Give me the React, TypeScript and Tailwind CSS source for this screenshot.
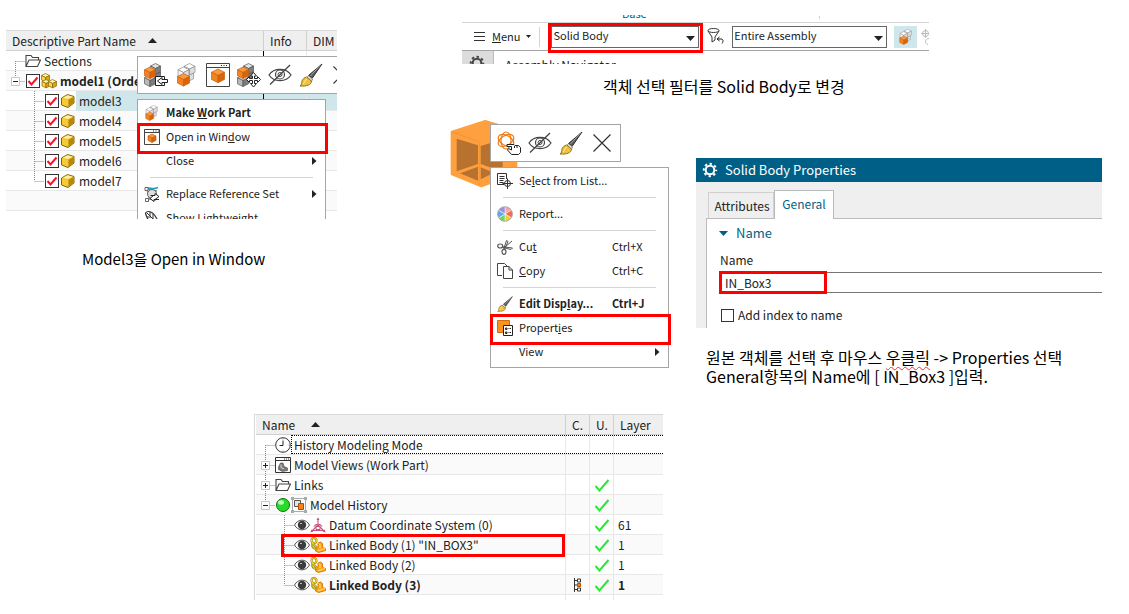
import { useState } from 'react';
import type { ReactNode } from 'react';
import clsx from 'clsx';

// ---------- Icons ----------

interface IsoProps {
  x: number;
  y: number;
  w: number;
  tone: 'orange' | 'gray' | 'yellow' | 'wire';
}

const tones = {
  orange: ['#fb9a3c', '#f58220', '#d9650b', '#c8600f'],
  gray: ['#e3e3e3', '#b9b9b9', '#7d7d7d', '#555555'],
  yellow: ['#fff3a8', '#f9d648', '#d9a514', '#8a6508'],
  wire: ['#ffffff', '#f3f3f3', '#dedede', '#8c8c8c'],
};

// Isometric cube: x is the centre line, y the top corner, w the half width
const Iso = ({ x, y, w, tone }: IsoProps) => {
  const h = w / 2;
  const d = w * 1.1;
  const [top, left, right, line] = tones[tone];
  return (
    <g stroke={line} strokeWidth=".7" strokeLinejoin="round">
      <path fill={top} d={`M${x} ${y}l${w} ${h}l${-w} ${h}l${-w} ${-h}z`} />
      <path fill={left} d={`M${x - w} ${y + h}l${w} ${h}v${d}l${-w} ${-h}z`} />
      <path fill={right} d={`M${x + w} ${y + h}l${-w} ${h}v${d}l${w} ${-h}z`} />
    </g>
  );
};

interface SvgProps {
  size?: number;
  box?: number;
  children: ReactNode;
}

const Svg = ({ size = 16, box = size, children }: SvgProps) => (
  <svg width={size} height={size} viewBox={`0 0 ${box} ${box}`} fill="none" className="shrink-0" aria-hidden="true">
    {children}
  </svg>
);

const CubeStack = () => (
  <>
    <Iso x={11.5} y={6.5} w={5} tone="gray" />
    <Iso x={11.5} y={0.5} w={5} tone="gray" />
    <Iso x={6} y={12} w={5.5} tone="gray" />
    <Iso x={6} y={4} w={5.5} tone="orange" />
  </>
);

const ReplaceIcon = () => (
  <Svg size={24}>
    <CubeStack />
    <path d="M11.500 13.500h9v9h-9z" fill="#fff" stroke="#222" />
    <path d="M23.500 16.500h-5.500v-2l-4.500 3.500l4.500 3.500v-2h5.500z" fill="#fff" stroke="#222" />
  </Svg>
);

const WorkPartIcon = ({ size = 24 }: { size?: number }) => (
  <Svg size={size} box={24}>
    <Iso x={13} y={7} w={5.5} tone="wire" />
    <Iso x={14.5} y={0.5} w={5.5} tone="wire" />
    <Iso x={8.5} y={4} w={5.5} tone="wire" />
    <Iso x={8.5} y={10.5} w={6} tone="orange" />
  </Svg>
);

const WindowIcon = ({ size = 24 }: { size?: number }) => (
  <Svg size={size} box={size}>
    <path d={size === 24 ? 'M.5.5h23v23H.5zM.5 4.500h23' : 'M.5.5h15v15H.5zM.5 3.500h15'} stroke="#444" />
    <path d={size === 24 ? 'M15 2.500h7' : 'M9 2h6'} stroke="#222" strokeWidth="1" strokeDasharray="1 1.500" />
    {size === 24 ? <Iso x={12} y={6} w={6.5} tone="orange" /> : <Iso x={8} y={5} w={4} tone="orange" />}
  </Svg>
);

const MoveIcon = () => (
  <Svg size={24}>
    <CubeStack />
    <path
      d="M16.500 9.500l3 3.500h-2v2.500h3v-2l3 3l-3 3v-2h-3v3h2l-3 3.500l-3-3.500h2v-3h-3v2l-3-3l3-3v2h3V13h-2z"
      fill="#fff"
      stroke="#222"
    />
  </Svg>
);

const HideIcon = () => (
  <Svg size={24}>
    <path d="M1 12c5-7.500 17-7.500 22 0c-5 7.500-17 7.500-22 0z" stroke="#444" strokeWidth="1.200" />
    <circle cx="12" cy="11.500" r="4.500" stroke="#444" strokeWidth="1.200" />
    <circle cx="12" cy="11.500" r="2" stroke="#444" />
    <path d="M2 21.500L22 2" stroke="#444" strokeWidth="1.300" />
  </Svg>
);

const BrushIcon = ({ size = 24 }: { size?: number }) => (
  <Svg size={size} box={24}>
    <path d="M23 1l-10 14.500l-3.500-3z" fill="#555" stroke="#333" />
    <path d="M21 2.500L11.500 13" stroke="#aaa" />
    <path d="M9.500 12.500l4 3.500l-1 2.500l-4.500-4z" fill="#ddd" stroke="#666" strokeWidth=".7" />
    <path d="M7.500 14l5 4c0 4-5 5.500-11.500 5c2-1 1.500-3 2-5c.5-2 2.500-3.500 4.500-4z" fill="#edc142" stroke="#93740f" />
    <path d="M8 16c-2 1-2.500 3-3.500 5" stroke="#fff0a6" />
  </Svg>
);

const CloseIcon = () => (
  <Svg size={24}>
    <path d="M3.500 3.500l17 17M20.500 3.500l-17 17" stroke="#333" strokeWidth="1.200" />
  </Svg>
);

const PickIcon = () => (
  <Svg size={24}>
    <g stroke="#f07d14" strokeWidth="1.200">
      <ellipse cx="9" cy="9.500" rx="5" ry="8.500" />
      <ellipse cx="9" cy="9.500" rx="5" ry="8.500" transform="rotate(60 9 9.500)" />
      <ellipse cx="9" cy="9.500" rx="5" ry="8.500" transform="rotate(120 9 9.500)" />
    </g>
    <path
      d="M14.500 23.500l-4-4.500l1-1.500l3 1.500v-3.500h-4.500v-2h7l1 1h3.500l2 2v5l-2 2z"
      fill="#fff"
      stroke="#222"
      strokeLinejoin="round"
    />
    <path d="M17.500 15v2M20 15v2" stroke="#222" />
  </Svg>
);

const RefSetIcon = () => (
  <Svg>
    <path d="M3 3l2.500 10M3 3l10 2M5 13l7 1" stroke="#888" strokeWidth="1.500" />
    <circle cx="8" cy="8" r="4.500" fill="#ddd" stroke="#666" />
    <path d="M2 2.500c4-2 6 2 12-1" stroke="#1ba0c8" strokeWidth="1.500" />
    <path d="M1 1.500h3v3H1zM1.500 12.500h3v3h-3z" fill="#fff" stroke="#666" />
    <path d="M6.500 9.500h4.500V7.500l4 3l-4 3M15 13.500h-5v2L6 12.500l3.500-3" fill="#fff" stroke="#222" />
  </Svg>
);

const FeatherIcon = () => (
  <Svg>
    <path d="M1.500 3c2-3 7-1 9 2c2 3 4 6 4.500 9l-2 1c-5-1-10-5-11.500-12z" fill="#fff" stroke="#333" strokeWidth="1.200" />
    <path d="M3 3l11 11M6 2v4M9 4v5M3 7h4" stroke="#333" />
  </Svg>
);

const ListPickIcon = () => (
  <Svg>
    <path d="M7 11.500H.5V.5h9V6" stroke="#333" />
    <path d="M2.500 3.500h5M2.500 5.500h5M2.500 7.500h4M2.500 9.500h4" stroke="#333" />
    <circle cx="10.500" cy="10.500" r="3" stroke="#333" />
    <path d="M10.500 5.500v10.500M5.500 10.500h10.500" stroke="#333" />
  </Svg>
);

const ReportIcon = () => (
  <Svg>
    <g stroke="#fff" strokeWidth=".5">
      <path d="M8 8V.5A7.500 7.500 0 0 1 14.500 4z" fill="#f7a6a0" />
      <path d="M8 8l6.500-4a7.500 7.500 0 0 1 0 8z" fill="#f26a52" />
      <path d="M8 8l6.500 4A7.500 7.500 0 0 1 8 15.500z" fill="#f2cf3a" />
      <path d="M8 8v7.500A7.500 7.500 0 0 1 1.500 12z" fill="#7fd15c" />
      <path d="M8 8l-6.500 4a7.500 7.500 0 0 1 0-8z" fill="#56aef0" />
      <path d="M8 8L1.500 4A7.500 7.500 0 0 1 8 .5z" fill="#9c8fe0" />
    </g>
    <circle cx="8" cy="8" r="7.300" stroke="#8e95a8" strokeWidth=".7" />
  </Svg>
);

const CutIcon = () => (
  <Svg>
    <ellipse cx="3.200" cy="7" rx="2.500" ry="2" stroke="#555" strokeWidth="1.200" />
    <ellipse cx="7" cy="12.800" rx="2" ry="2.500" stroke="#555" strokeWidth="1.200" />
    <path d="M5.500 7.800L15.500 9L14 10.500L6 8.500zM6.500 10.500L9.500 1.500L11 2.500L8 9.500zM8 8l7-6" fill="#fff" stroke="#555" />
  </Svg>
);

const CopyIcon = () => (
  <Svg>
    <path d="M5 12.500H.5V.5h7l3 3" stroke="#444" />
    <path d="M6.500 3.500h5.500l3.500 3.500v8.500h-9z" fill="#fff" stroke="#444" />
    <path d="M12 3.500V7h3.500" stroke="#444" />
  </Svg>
);

const PropertiesIcon = () => (
  <Svg>
    <path d="M.5.5h12v12H.5z" fill="#f7941d" stroke="#d66a0c" />
    <path d="M6.500 5.500h9v10h-9z" fill="#fff" stroke="#222" />
    <path d="M8.500 8h1.500v1.500H8.500zM8.500 12h1.500v1.500H8.500zM11.500 8.500h1M13 8.500h1M11.500 12.500h1M13 12.500h1" stroke="#222" />
  </Svg>
);

const FolderIcon = () => (
  <Svg>
    <path d="M1 13.500V2.500h5l1.500 2h6V7M1 13.500l3-6.500h11.500l-3 6.500z" stroke="#444" strokeWidth="1.100" />
  </Svg>
);

const AssemblyIcon = () => (
  <Svg>
    <Iso x={4.5} y={0.5} w={4} tone="yellow" />
    <Iso x={5} y={6.5} w={4} tone="yellow" />
    <Iso x={11.5} y={6.5} w={4} tone="yellow" />
  </Svg>
);

const PartIcon = () => (
  <Svg>
    <path d="M1.500 5l6-3.500l6.500 2v6.500l-6 4.500l-6.500-2.500z" fill="#e9bd25" stroke="#8a6508" strokeLinejoin="round" />
    <path d="M2.500 5l5-2.700l5.500 1.500L8 6z" fill="#fff09a" />
    <path d="M2.200 5.700L8 7v6.500l-5.800-2z" fill="#f5cb3a" />
    <path d="M8.500 7v6.500l5-4V4z" fill="#b98708" />
  </Svg>
);

const ClockIcon = () => (
  <Svg>
    <circle cx="8" cy="8" r="7.300" fill="#fff" stroke="#333" />
    <path d="M8 3.500V8.500H4.500" stroke="#222" />
    <path d="M8 1v1.500M8 13.500V15M13.500 8H15" stroke="#999" />
  </Svg>
);

const ViewsIcon = () => (
  <Svg>
    <path d="M.5.5h15v15H.5z" fill="#fff" stroke="#333" />
    <path d="M.5 3.500h15" stroke="#333" />
    <path d="M9 2h6" stroke="#222" strokeDasharray="1 1" />
    <path d="M3.500 10l2-4h2.500l1 3.500l3.500 1.500v2.500l-5 1l-4-2z" fill="#777" stroke="#444" strokeWidth=".6" />
    <path d="M6 7.500v3l3 1.500" stroke="#ddd" />
  </Svg>
);

const BallIcon = () => (
  <Svg>
    <circle cx="8" cy="8" r="6.500" fill="#27dc27" stroke="#137013" />
    <ellipse cx="6" cy="5.500" rx="3" ry="2.200" fill="#b9ffb9" />
  </Svg>
);

const HistoryIcon = () => (
  <Svg>
    <path d="M1.500 1.500h13v13h-13z" fill="#fff" stroke="#aaa" />
    <path d="M0 0h3v3H0zM13 0h3v3h-3zM0 13h3v3H0zM13 13h3v3h-3z" fill="#aaa" />
    <path d="M3.500 3.500h6v6h-6z" fill="#e4e4e4" stroke="#555" />
    <path d="M7.500 6.500h5v6h-5z" fill="#f58220" stroke="#b04d00" />
  </Svg>
);

const EyeIcon = () => (
  <Svg>
    <path d="M.5 8C4 1.500 12 1.500 15.500 8C12 14.500 4 14.500.5 8z" fill="#fff" stroke="#555" />
    <circle cx="8" cy="8" r="4.200" fill="#3c3c3c" />
    <path d="M6 6.500h2" stroke="#bbb" />
  </Svg>
);

const DatumIcon = () => (
  <Svg>
    <path d="M8 1.500v6M8 8L2 14M8 8l6 6M4 9.500c2-3 6-3 8 0M3 13.500h10" stroke="#c4507e" strokeWidth="1.100" />
    <path d="M6.500 3L8 .5L9.500 3zM.5 15.500l.8-3l2 2zM15.500 15.500l-.8-3l-2 2z" fill="#c4507e" />
    <path d="M6 9.500h4v3H6z" stroke="#c4507e" />
  </Svg>
);

const LinkedIcon = () => (
  <Svg>
    <path d="M5.500 11l2.500-1V6l2.500-1l2 1.500v4l3 1v2L8.500 15.500l-3-1.500z" fill="#ffa31a" stroke="#e07f00" strokeLinejoin="round" />
    <path d="M6 12l3 1.500l6-2M8.500 6.500l1.500 1v3.500" stroke="#ffdf85" />
    <path d="M3.500 1c2 0 3 1 3 2.500S5.500 6 4 6S1.500 5 1.500 3.500S2.500 1 3.500 1zM3 6.500l3.500 4" stroke="#8f7a10" strokeWidth="2" />
    <path d="M3 6c-1.500 1-1.500 3 0 4.500s3.500 2 4.500 1" stroke="#8f7a10" strokeWidth="1.800" />
    <path d="M3.500 1c2 0 3 1 3 2.500S5.500 6 4 6S1.500 5 1.500 3.500S2.500 1 3.500 1zM3 6.500l3.500 4" stroke="#f0d335" strokeWidth="1.100" />
    <path d="M3 6c-1.500 1-1.500 3 0 4.500s3.500 2 4.500 1" stroke="#f0d335" />
  </Svg>
);

const GreenCheck = () => (
  <Svg>
    <path d="M1.500 9l4 4.500L14.500 3" stroke="#2ee639" strokeWidth="2" />
  </Svg>
);

const ChainIcon = () => (
  <svg width="8" height="14" viewBox="0 0 8 14" fill="none" className="shrink-0" aria-hidden="true">
    <path d="M.5 0v14M.5 2.500H4M.5 7H4M.5 11.500H4" stroke="#333" />
    <path d="M3.500 1h3v3h-3zM3.500 10h3v3h-3z" fill="#fff" stroke="#333" />
    <path d="M3.500 5.500h3v3h-3z" fill="#f58220" stroke="#b04d00" />
  </svg>
);

const FilterIcon = () => (
  <svg width="17" height="17" viewBox="0 0 17 17" fill="none" aria-hidden="true">
    <ellipse cx="6.500" cy="2.500" rx="5.500" ry="2" stroke="#333" />
    <path d="M1 3l4 6v5l3-2V9l4-6" stroke="#333" />
    <path d="M12.500 9l-2.500 2l2.500 2M10.500 11h3.500c3 0 2 3.500 1 4.500" stroke="#222" />
  </svg>
);

const GearIcon = ({ color }: { color: string }) => (
  <Svg>
    <circle cx="8" cy="8" r="4.300" stroke={color} strokeWidth="2" />
    <circle cx="8" cy="8" r="6.200" stroke={color} strokeWidth="2" strokeDasharray="2.400 2.470" strokeDashoffset="1.200" />
  </Svg>
);

const Triangle = ({ dir, className }: { dir: 'up' | 'down' | 'right'; className?: string }) => {
  if (dir === 'right') {
    return (
      <svg width="5" height="8" viewBox="0 0 5 8" className={className} aria-hidden="true">
        <path d="M0 0l4.500 4L0 8z" fill="currentColor" />
      </svg>
    );
  }
  return (
    <svg width="9" height="5" viewBox="0 0 9 5" className={className} aria-hidden="true">
      <path d={dir === 'up' ? 'M4.500 0L9 5H0z' : 'M0 0h9L4.500 5z'} fill="currentColor" />
    </svg>
  );
};

const SolidBox = () => (
  <svg width="68" height="68" viewBox="0 0 204 204" className="absolute left-0 top-0" aria-hidden="true">
    <path d="M6 36L106 4l92 28v128L94 198L6 162z" fill="#ffa040" stroke="#ffa040" strokeWidth="8" strokeLinejoin="round" />
    <path d="M20 56l64 20v56l-64 22z" fill="#b87230" />
    <path d="M30 160l54-20v42z" fill="#b87230" />
    <path d="M92 78l66-20v98l-66-24z" fill="#b87230" />
    <path d="M92 142l40 16l-40 20z" fill="#b87230" />
    <path d="M6 36l82 30v130" stroke="#f8932f" strokeWidth="3" fill="none" />
  </svg>
);

// ---------- Shared pieces ----------

const RedBox = ({ className }: { className: string }) => (
  <span className={clsx('pointer-events-none absolute z-10 border-3 border-[#ff0000]', className)} />
);

interface GuideProps {
  depth: 1 | 2;
  first?: boolean;
  last?: boolean;
  expander?: '+' | '-';
}

// Dotted connector lines and the expander in front of a tree row
const Guide = ({ depth, first, last, expander }: GuideProps) => {
  const x = depth === 1 ? 9.5 : 28.5;
  const end = depth === 1 ? 19 : 38;
  return (
    <svg width={end} height="20" viewBox={`0 0 ${end} 20`} fill="none" className="shrink-0" aria-hidden="true">
      <path
        d={`M${x} ${first ? 10 : 0}V${last ? 10 : 20}M${x} 10.500H${end}`}
        stroke="#8a8a8a"
        strokeDasharray="1 1"
      />
      {expander && <path d="M5.500 6.500h8v8h-8z" fill="#fff" stroke="#c8c8c8" />}
      {expander && <path d={expander === '+' ? 'M7 10.500h5M9.500 8v5' : 'M7 10.500h5'} stroke="#222" />}
    </svg>
  );
};

const PartCheckbox = ({ name }: { name: string }) => {
  const [checked, setChecked] = useState(true);
  return (
    <label className="relative mx-px size-3.5 shrink-0">
      <input
        type="checkbox"
        aria-label={`Show ${name}`}
        checked={checked}
        onChange={(e) => setChecked(e.target.checked)}
        className="block size-3.5 appearance-none border border-[#333] bg-white"
      />
      {checked && (
        <svg width="14" height="14" viewBox="0 0 14 14" fill="none" className="absolute left-0 top-0">
          <path d="M2.500 7l3 3.500L11.500 3.500" stroke="#f5142d" strokeWidth="2" />
        </svg>
      )}
    </label>
  );
};

const IconBar = ({ children }: { children: ReactNode }) => (
  <div className="flex w-max gap-[7px] border border-[#a5a5a5] bg-white p-1.5">{children}</div>
);

const BarButton = ({ label, children }: { label: string; children: ReactNode }) => (
  <button type="button" aria-label={label} className="hover:bg-[#cfe6ec]">
    {children}
  </button>
);

interface MenuItemProps {
  icon?: ReactNode;
  children: ReactNode;
  shortcut?: string;
  submenu?: boolean;
  bold?: boolean;
  marked?: boolean;
}

const MenuItem = ({ icon, children, shortcut, submenu, bold, marked }: MenuItemProps) => (
  <button
    type="button"
    className={clsx('relative flex h-6 w-full items-center gap-1.5 pl-1.5 text-left', bold && 'font-bold')}
  >
    <span className="w-4 shrink-0">{icon}</span>
    <span className="flex-1 whitespace-nowrap pb-0.5">{children}</span>
    {shortcut && <span className="w-14 pb-0.5">{shortcut}</span>}
    {submenu && <Triangle dir="right" className="mr-2" />}
    {marked && <RedBox className="-bottom-[5px] -left-px -right-[3px] -top-0.5" />}
  </button>
);

const MenuRule = () => <hr className="mx-3 my-1 border-t border-[#d4d4d4]" />;

const Menu = ({ children, className }: { children: ReactNode; className: string }) => (
  <div className={clsx('border border-[#a5a5a5] bg-white pb-[3px] pt-px text-[11px] text-[#222]', className)}>{children}</div>
);

// ---------- Assembly navigator ----------

const parts = ['model3', 'model4', 'model5', 'model6', 'model7'];

const AssemblyNavigator = () => (
  <div className="relative h-[189px] overflow-hidden border-t border-[#d9d9d9]">
    <table className="w-full table-fixed border-separate border-spacing-0 text-left text-xs text-[#222]">
      <thead className="bg-[#efefef]">
        <tr className="h-5">
          <th className="border-b border-[#d0d0d0] p-0 font-normal">
            <span className="flex h-[19px] items-center gap-3 pl-1.5">
              Descriptive Part Name <Triangle dir="up" />
            </span>
          </th>
          <th className="w-[43px] border-b border-l border-[#d0d0d0] p-0 pl-1.5 font-normal">Info</th>
          <th className="w-[31px] overflow-hidden border-b border-l border-[#d0d0d0] p-0 pl-1.5 font-normal">DIM</th>
        </tr>
      </thead>
      <tbody>
        <tr className="h-5">
          <td className="border-b border-[#e8e8e8] p-0">
            <span className="flex h-[19px] items-center">
              <Guide depth={1} first />
              <FolderIcon />
              <span className="pl-[3px]">Sections</span>
            </span>
          </td>
          <td className="border-b border-l border-b-[#e8e8e8] border-l-black p-0" />
          <td className="border-b border-l border-[#e8e8e8] p-0" />
        </tr>
        <tr className="h-5 bg-[#fafafa]">
          <td className="border-b border-[#e8e8e8] p-0">
            <span className="flex h-[19px] items-center whitespace-nowrap">
              <Guide depth={1} last expander="-" />
              <PartCheckbox name="model1" />
              <AssemblyIcon />
              <span className="pl-[3px] font-bold">model1 (Orde</span>
            </span>
          </td>
          <td className="border-b border-l border-b-[#e8e8e8] border-l-black p-0" />
          <td className="border-b border-l border-[#e8e8e8] p-0" />
        </tr>
        {parts.map((part, i) => (
          <tr key={part} className={clsx('h-5', i % 2 === 1 && 'bg-[#fafafa]')}>
            <td className="border-b border-[#e8e8e8] p-0">
              <span className="flex h-[19px] items-center">
                <Guide depth={2} last={i === parts.length - 1} />
                <PartCheckbox name={part} />
                <PartIcon />
                <span className={clsx('flex h-5 flex-1 items-center pl-[3px]', i === 0 && 'bg-[#cfe6ea]')}>{part}</span>
              </span>
            </td>
            <td className={clsx('border-b border-l border-b-[#e8e8e8] p-0', i === 0 ? 'border-l-black bg-[#cfe6ea]' : 'border-l-[#e8e8e8]')} />
            <td className={clsx('border-b border-l border-[#e8e8e8] p-0', i === 0 && 'bg-[#cfe6ea]')} />
          </tr>
        ))}
        <tr className="h-5 bg-[#fafafa]">
          <td className="border-b border-[#e8e8e8] p-0" />
          <td className="border-b border-l border-[#e8e8e8] p-0" />
          <td className="border-b border-l border-[#e8e8e8] p-0" />
        </tr>
      </tbody>
    </table>

    {/* Context menu of the selected part */}
    <div className="absolute left-[131px] top-[25px]">
      <IconBar>
        <BarButton label="Replace Component"><ReplaceIcon /></BarButton>
        <BarButton label="Make Work Part"><WorkPartIcon /></BarButton>
        <BarButton label="Open in Window"><WindowIcon /></BarButton>
        <BarButton label="Move Component"><MoveIcon /></BarButton>
        <BarButton label="Hide"><HideIcon /></BarButton>
        <BarButton label="Edit Display"><BrushIcon /></BarButton>
        <BarButton label="Delete"><CloseIcon /></BarButton>
      </IconBar>
      <Menu className="mt-[5px] w-[189px]">
        <MenuItem icon={<WorkPartIcon size={16} />} bold>Make <u>W</u>ork Part</MenuItem>
        <MenuItem icon={<WindowIcon size={16} />} marked>Open in Win<u>d</u>ow</MenuItem>
        <MenuItem submenu>Close</MenuItem>
        <MenuRule />
        <MenuItem icon={<RefSetIcon />} submenu>Replace Reference Set</MenuItem>
        <MenuItem icon={<FeatherIcon />}>Show Lightweight</MenuItem>
      </Menu>
    </div>
  </div>
);

// ---------- Selection toolbar ----------

interface FilterSelectProps {
  label: string;
  options: string[];
  className: string;
  marked?: boolean;
}

const FilterSelect = ({ label, options, className, marked }: FilterSelectProps) => (
  <label className={clsx('relative block', className)}>
    <select
      aria-label={label}
      className="block h-[22px] w-full appearance-none border border-[#666] bg-white pb-0.5 pl-px text-[11px] text-[#222]"
    >
      {options.map((option) => (
        <option key={option}>{option}</option>
      ))}
    </select>
    <Triangle dir="down" className="pointer-events-none absolute right-1 top-2.5" />
    {marked && <RedBox className="-bottom-[5px] -left-[3px] -right-1 -top-[3px]" />}
  </label>
);

const SelectionToolbar = () => (
  <div className="ml-3 mr-[200px] h-[49px] overflow-hidden text-[11px] text-[#222]">
    <div className="flex h-[7px] items-end overflow-hidden pb-[3px] text-[#005f87]">
      <span className="ml-[160px] leading-3">Base</span>
      <span className="ml-auto mr-[109px] h-[3px] w-px bg-[#d0d0d0]" />
    </div>
    <div className="flex h-[29px] items-center border-b border-t border-b-[#a5a5a5] border-t-[#d4d4d4]">
      <button type="button" className="ml-3 flex items-center gap-1.5 pb-px">
        <svg width="11" height="9" viewBox="0 0 11 9" className="mr-px" aria-hidden="true">
          <path d="M0 .5h11M0 4.500h11M0 8.500h11" stroke="#333" />
        </svg>
        <span><u>M</u>enu</span>
        <svg width="5" height="3" viewBox="0 0 5 3" aria-hidden="true">
          <path d="M0 0h5L2.500 3z" fill="#222" />
        </svg>
      </button>
      <span className="mx-2 h-5 w-px bg-[#d4d4d4]" />
      <FilterSelect label="Type filter" options={['Solid Body', 'Face', 'Edge']} className="ml-[3px] w-[148px]" marked />
      <button type="button" aria-label="Reset filters" className="mx-2">
        <FilterIcon />
      </button>
      <FilterSelect label="Selection scope" options={['Entire Assembly', 'Within Work Part Only']} className="w-[155px]" />
      <button type="button" aria-label="Select in work part" className="ml-[7px] flex h-[22px] w-[23px] shrink-0 items-center justify-center bg-[#cfe6ec]">
        <WorkPartIcon size={16} />
      </button>
      <svg width="8" height="18" viewBox="0 0 8 18" fill="none" className="ml-1 shrink-0" aria-hidden="true">
        <circle cx="4.500" cy="5.500" r="3" stroke="#bbb" />
        <path d="M4.500 1v9M0 5.500h8M8 10.500c-4 0-5 5-1 6" stroke="#bbb" />
      </svg>
    </div>
    <div className="flex h-6">
      <span className="w-8 border-r border-[#bbb] bg-[#dcdcdc] pl-[7px] pt-1">
        <GearIcon color="#444" />
      </span>
      <span className="pl-[11px] pt-1.5 text-xs">Assembly Navigator</span>
    </div>
  </div>
);

// ---------- Body context menu ----------

const BodyMenu = () => (
  <div className="relative w-[219px] shrink-0 pl-10 pt-1">
    <SolidBox />
    <div className="relative">
      <IconBar>
        <BarButton label="Pick"><PickIcon /></BarButton>
        <BarButton label="Hide"><HideIcon /></BarButton>
        <BarButton label="Edit Display"><BrushIcon /></BarButton>
        <BarButton label="Delete"><CloseIcon /></BarButton>
      </IconBar>
      <Menu className="mt-[5px]">
        <MenuItem icon={<ListPickIcon />}>Se<u>l</u>ect from List...</MenuItem>
        <MenuRule />
        <MenuItem icon={<ReportIcon />}>Report...</MenuItem>
        <MenuRule />
        <MenuItem icon={<CutIcon />} shortcut="Ctrl+X">Cu<u>t</u></MenuItem>
        <MenuItem icon={<CopyIcon />} shortcut="Ctrl+C"><u>C</u>opy</MenuItem>
        <MenuRule />
        <MenuItem icon={<BrushIcon size={16} />} shortcut="Ctrl+J" bold>Edit Disp<u>l</u>ay...</MenuItem>
        <MenuItem icon={<PropertiesIcon />} marked>Propert<u>i</u>es</MenuItem>
        <MenuItem submenu>View</MenuItem>
      </Menu>
    </div>
  </div>
);

// ---------- Properties dialog ----------

const PropertiesDialog = () => {
  const [name, setName] = useState('IN_Box3');
  return (
    <div className="overflow-hidden bg-[#efefef] text-xs text-[#222]">
      <h2 className="flex h-6 items-center gap-[7px] bg-[#005f87] pl-1.5 text-[13px] text-white">
        <GearIcon color="#fff" />
        Solid Body Properties
      </h2>
      <div className="flex items-end pl-3 pt-2">
        <button type="button" className="h-[26px] w-[66px] border border-b-0 border-[#d0d0d0] pl-0.5 text-center">Attributes</button>
        <button type="button" className="relative -mb-px h-[29px] w-[60px] border border-b-0 border-[#bbb] bg-white pb-0.5 text-center text-[#005f87]">
          General
        </button>
      </div>
      <div className="ml-2.5 h-[110px] border-l border-t border-[#bbb] bg-white pl-3">
        <h3 className="flex h-7 items-center gap-2 text-[13px] text-[#005f87]">
          <Triangle dir="down" />
          Name
        </h3>
        <label htmlFor="body-name" className="block h-[25px] pl-px leading-[25px]">Name</label>
        <div className="relative">
          <input
            id="body-name"
            value={name}
            onChange={(e) => setName(e.target.value)}
            className="block h-[21px] w-full border border-r-0 border-[#777] bg-white pb-px pl-[5px] outline-none"
          />
          <RedBox className="-bottom-px -top-px left-0 w-[108px]" />
        </div>
        <label className="mt-3.5 flex h-4 items-center gap-1 pl-0.5">
          <input type="checkbox" className="size-[13px] appearance-none border border-[#333] bg-white checked:bg-[#005f87]" />
          Add index to name
        </label>
      </div>
    </div>
  );
};

// ---------- Part history ----------

interface HistoryRow {
  label: string;
  icons: ReactNode;
  depth: 1 | 2;
  expander?: '+' | '-';
  updated?: boolean;
  layer?: string;
}

const linked = <><EyeIcon /><LinkedIcon /></>;

const history: HistoryRow[] = [
  { label: 'History Modeling Mode', icons: <ClockIcon />, depth: 1 },
  { label: 'Model Views (Work Part)', icons: <ViewsIcon />, depth: 1, expander: '+' },
  { label: 'Links', icons: <FolderIcon />, depth: 1, expander: '+', updated: true },
  { label: 'Model History', icons: <><BallIcon /><HistoryIcon /></>, depth: 1, expander: '-', updated: true },
  { label: 'Datum Coordinate System (0)', icons: <><EyeIcon /><DatumIcon /></>, depth: 2, updated: true, layer: '61' },
  { label: 'Linked Body (1) "IN_BOX3"', icons: linked, depth: 2, updated: true, layer: '1' },
  { label: 'Linked Body (2)', icons: linked, depth: 2, updated: true, layer: '1' },
  { label: 'Linked Body (3)', icons: linked, depth: 2, updated: true, layer: '1' },
];

const PartNavigator = () => (
  <div className="ml-[248px] h-[186px] max-w-[409px] overflow-hidden border-l border-t border-[#d9d9d9] pl-px">
    <table className="w-full table-fixed border-separate border-spacing-0 text-left text-xs text-[#222]">
      <thead className="bg-[#efefef]">
        <tr className="h-5">
          <th className="border-b border-[#d0d0d0] p-0 font-normal">
            <span className="flex h-[19px] items-center gap-4 pl-1.5">
              Name <Triangle dir="up" />
            </span>
          </th>
          <th className="w-6 border-b border-l border-[#d0d0d0] p-0 pl-1.5 font-normal">C.</th>
          <th className="w-6 border-b border-l border-[#d0d0d0] p-0 pl-1.5 font-normal">U.</th>
          <th className="w-[50px] border-b border-l border-[#d0d0d0] p-0 pl-1.5 font-normal">Layer</th>
        </tr>
      </thead>
      <tbody>
        {history.map((row, i) => {
          const isLast = i === history.length - 1;
          const focus = i === 0 && 'border-y border-dotted border-black';
          return (
            <tr key={row.label} className={clsx('h-5', i % 2 === 1 && 'bg-[#fafafa]', isLast && 'font-bold')}>
              <td className="relative border-b border-[#e8e8e8] p-0">
                <span className="flex h-[19px] items-center">
                  <Guide depth={row.depth} first={i === 0} last={i === 3 || isLast} expander={row.expander} />
                  {row.icons}
                  <span className={clsx('flex h-[19px] flex-1 items-center', focus, i === 0 ? 'border-l pl-0.5' : 'pl-[3px]')}>
                    {row.label}
                  </span>
                </span>
                {i === 5 && <RedBox className="-bottom-[3px] -top-px left-[25px] right-0" />}
              </td>
              <td className="border-b border-l border-[#e8e8e8] p-0">
                <span className={clsx('flex h-[19px] items-center justify-center', focus)}>{isLast && <ChainIcon />}</span>
              </td>
              <td className="border-b border-l border-[#e8e8e8] p-0">
                <span className={clsx('flex h-[19px] items-center justify-center', focus)}>{row.updated && <GreenCheck />}</span>
              </td>
              <td className="border-b border-l border-[#e8e8e8] p-0">
                <span className={clsx('flex h-[19px] items-center pl-1', focus)}>{row.layer}</span>
              </td>
            </tr>
          );
        })}
        <tr className="h-5">
          <td className="p-0" />
          <td className="border-l border-[#e8e8e8] p-0" />
          <td className="border-l border-[#e8e8e8] p-0" />
          <td className="border-l border-[#e8e8e8] p-0" />
        </tr>
      </tbody>
    </table>
  </div>
);

export default function App() {
  return (
    <main className="bg-white pl-1.5 font-['Noto_Sans_CJK_KR',sans-serif] text-black">
      <div className="grid grid-cols-[331fr_679fr] gap-x-[113px]">
        <section className="min-w-0 pt-[30px]">
          <AssemblyNavigator />
          <p className="mt-7 pl-[76px] text-[15px] leading-6">Model3을 Open in Window</p>
        </section>

        <section className="min-w-0 pt-[15px]">
          <SelectionToolbar />
          <p className="mt-2.5 pl-[153px] text-base leading-6">객체 선택 필터를 Solid Body로 변경</p>
          <div className="mt-[22px] flex gap-[27px]">
            <BodyMenu />
            <div className="mr-[27px] min-w-0 flex-1 pt-[38px]">
              <PropertiesDialog />
              <p className="mt-5 pl-2.5 text-base leading-[19px]">
                원본 객체를 선택 후 마우스{' '}
                <span className="underline decoration-red-500 decoration-wavy decoration-1 underline-offset-2">우클릭</span>
                {' -> Properties 선택'}
                <br />
                General항목의 Name에 [ IN_Box3 ]입력.
              </p>
            </div>
          </div>
        </section>
      </div>

      <section className="mt-7">
        <PartNavigator />
      </section>
    </main>
  );
}
